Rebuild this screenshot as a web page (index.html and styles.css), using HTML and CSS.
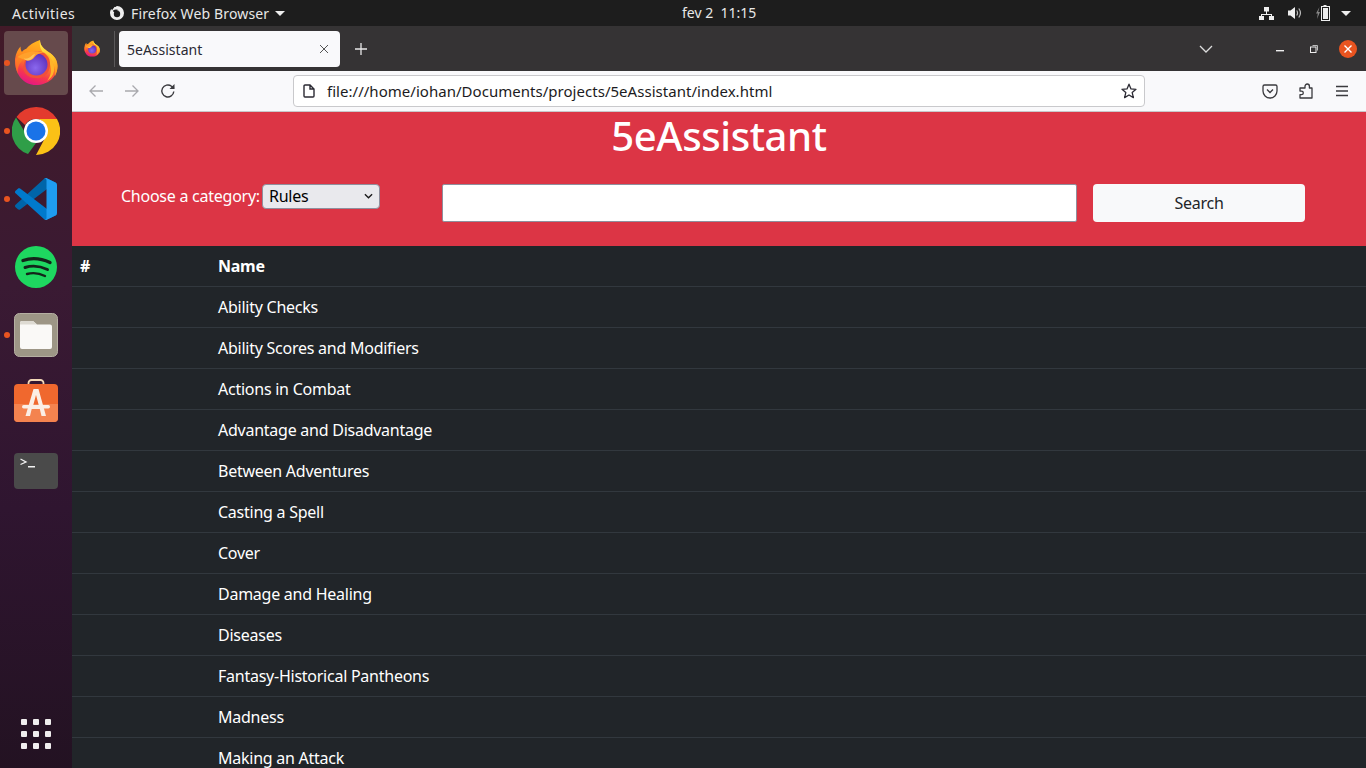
FILE: index.html
```html
<!DOCTYPE html>
<html lang="pt">
<head>
<meta charset="utf-8">
<title>5eAssistant</title>
<link rel="stylesheet" href="styles.css">
</head>
<body>
<svg class="defs" width="0" height="0" aria-hidden="true">
  <defs>
    <linearGradient id="ffBody" x1="0.7" y1="0.05" x2="0.35" y2="1">
      <stop offset="0" stop-color="#ffb81f"/><stop offset="0.45" stop-color="#ff8a1f"/><stop offset="0.75" stop-color="#f8394b"/><stop offset="1" stop-color="#e31587"/>
    </linearGradient>
    <linearGradient id="ffFlame" x1="0.3" y1="0" x2="0.7" y2="1">
      <stop offset="0" stop-color="#ffe44a"/><stop offset="0.6" stop-color="#ffc42a"/><stop offset="1" stop-color="#ff9a1f"/>
    </linearGradient>
    <linearGradient id="ffLeft" x1="0.5" y1="0" x2="0.5" y2="1">
      <stop offset="0" stop-color="#ff9a1f"/><stop offset="1" stop-color="#ff5a2b"/>
    </linearGradient>
    <radialGradient id="ffCore" cx="0.45" cy="0.65" r="0.7">
      <stop offset="0" stop-color="#8a68ee"/><stop offset="1" stop-color="#5a2cb8"/>
    </radialGradient>
    <symbol id="firefox" viewBox="0 0 44 46">
      <path d="M1 20C2 14 4 10 6.500 7.500C6.500 10 7 12 8 13C9 11.500 10.500 10.500 12 10C15 6 20 3 26 1C26 6 29 9 33 12C38 15 43 19 43.500 27C43.500 38 34 46 22 46C10 46 .5 36 1 20Z" fill="url(#ffBody)"/>
      <path d="M26 1C26 6 29 9 33 12C38 15 43.500 19 43.500 27C43.500 31 42.500 34 41 37C42 28 38 19 31 15C27 12 25 7 26 1Z" fill="url(#ffFlame)"/>
      <path d="M30 13C37 17 41 24 40 32C39 37 36 40 33 42C37 37 38 31 36 25C34 19 31 16 30 13Z" fill="#ffb52a"/>
      <path d="M22 12C31 12 37 18 36 27C35 36 28 40 21 39C16 39 11 36 9 30C10 20 15 13 22 12Z" fill="#f0503a"/>
      <circle cx="22.500" cy="25.500" r="11" fill="url(#ffCore)"/>
      <path d="M12 10C9 11 8 13 8 15C5 16 3 18 1.500 21C1 26 2 31 4 35C3 28 6 23 10 20Z" fill="url(#ffLeft)"/>
      <path d="M3.500 18C8 14.500 13 13.500 18 12.500C22 12 27 12.500 30 14C26 13.500 23 15 21 17.500C19 20.500 16 22 14 21.500C10 21 7 19 3.500 18Z" fill="#ffa12b"/>
      <path d="M10 19.500C13 20 16 19 18 16.500C19 15.500 20 15 21 15C20 18 17 21.500 14 21.500C12.500 21.500 11 21 10 19.500Z" fill="#ffc45a"/>
    </symbol>
  </defs>
</svg>

<header class="topbar">
  <span class="activities">Activities</span>
  <span class="appmenu">
    <svg class="app-glyph" viewBox="0 0 16 16"><path d="M8 1a7 7 0 1 1-7 7c0-1.500.5-3 1.400-4l.6 1.500C3.700 4 5 3 5.500 1.800 6 2.500 7 1.600 8 1z" fill="#eee"/><circle cx="8" cy="9" r="3.200" fill="#1d1d1d"/><path d="M4 5.500c2-1.500 4-1.500 6 0-2 0-3 .5-3 1.500H4.500z" fill="#1d1d1d"/></svg>
    <span class="app-name">Firefox Web Browser</span>
    <i class="caret"></i>
  </span>
  <span class="clock">fev 2&nbsp;&nbsp;11:15</span>
  <span class="tray">
    <svg class="tray-net" viewBox="0 0 15 13"><path d="M5 0h5v4.500H8v2.500h5v2h2v4h-5V9h2V8H3v1h2v4H0V9h2V7h5V4.500H5z" fill="#eee"/></svg>
    <svg class="tray-vol" viewBox="0 0 14 12"><path d="M0 3.500h2.500L7 0v12L2.500 8.500H0z" fill="#eee"/><path d="M8.700 3.500q1.700 2.500 0 5M10.800 1.500q3.300 4.500 0 9" fill="none" stroke="#bbb" stroke-width="1.200"/></svg>
    <svg class="tray-bat" viewBox="0 0 14 16"><path d="M3.500 2 0 8.500h1.800L1 14 4 7H2.200z" fill="#888"/><path d="M7.500 0h3v1H14v15H5V1h2.500z" fill="#eee"/><rect x="6" y="2" width="7" height="13" fill="#1d1d1d"/><rect x="7" y="3" width="5" height="11" fill="#eee"/></svg>
    <i class="caret"></i>
  </span>
</header>

<div class="desktop">
  <nav class="dock">
    <div class="dock-item active"><i class="run-dot"></i>
      <svg class="dock-icon ff" viewBox="0 0 44 46"><use href="#firefox"/></svg>
    </div>
    <div class="dock-item"><i class="run-dot"></i>
      <svg class="dock-icon chrome" viewBox="0 0 48 48">
        <path d="M24 0A24 24 0 0 1 45 12H24A12 12 0 0 0 13 18L4.500 10A24 24 0 0 1 24 0Z" fill="#e33b2e"/>
        <path d="M4 10.500 14 27A12 12 0 0 0 24 36L16 47A24 24 0 0 1 4 10.500Z" fill="#2f9e48"/>
        <path d="M24 12H45A24 24 0 0 1 24 48L33 31A12 12 0 0 0 24 12Z" fill="#fbc116"/>
        <circle cx="24" cy="24" r="12" fill="#fff"/><circle cx="24" cy="24" r="9.500" fill="#1a73e8"/>
      </svg>
    </div>
    <div class="dock-item"><i class="run-dot"></i>
      <svg class="dock-icon vscode" viewBox="0 0 100 100">
        <path d="M96.460 10.800 75.860.900C73.470-.260 70.620.220 68.750 2.090L1.350 63.540c-1.810 1.650-1.810 4.500 0 6.160l5.500 5c1.490 1.350 3.730 1.450 5.330.230L93.380 13.300c2.730-2.070 6.620-.130 6.620 3.300v-.240c0-2.400-1.370-4.590-3.540-5.630Z" fill="#0065a9"/>
        <path d="M96.460 89.200 75.860 99.100c-2.390 1.150-5.240.670-7.110-1.200L1.350 36.460c-1.810-1.650-1.810-4.500 0-6.160l5.500-5c1.490-1.350 3.730-1.450 5.330-.230L93.380 86.700c2.730 2.070 6.620.130 6.620-3.300v.240c0 2.400-1.370 4.590-3.540 5.630Z" fill="#007acc"/>
        <path d="M75.860 99.130c-2.390 1.150-5.240.660-7.110-1.210 2.310 2.310 6.250.670 6.250-2.590V4.670c0-3.260-3.940-4.890-6.250-2.590 1.870-1.870 4.720-2.360 7.110-1.210l20.600 9.910c2.170 1.040 3.540 3.230 3.540 5.630v67.170c0 2.400-1.370 4.590-3.540 5.630l-20.600 9.920Z" fill="#1f9cf0"/>
      </svg>
    </div>
    <div class="dock-item">
      <svg class="dock-icon spotify" viewBox="0 0 42 42">
        <circle cx="21" cy="21" r="21" fill="#1ed760"/>
        <path d="M8 14.500Q21 10 35 16.500" fill="none" stroke="#14241a" stroke-width="3.400" stroke-linecap="round"/>
        <path d="M10 21.500Q21 18 32.500 23.500" fill="none" stroke="#14241a" stroke-width="2.900" stroke-linecap="round"/>
        <path d="M12 28Q21 25.500 30 30" fill="none" stroke="#14241a" stroke-width="2.400" stroke-linecap="round"/>
      </svg>
    </div>
    <div class="dock-item"><i class="run-dot"></i>
      <svg class="dock-icon square" viewBox="0 0 44 44">
        <rect x=".5" y=".5" width="43" height="43" rx="5" fill="#9d9686" stroke="#b5afa2"/>
        <path d="M6 10a2 2 0 0 1 2-2h11l4 3.500h13a2 2 0 0 1 2 2V34a2 2 0 0 1-2 2H8a2 2 0 0 1-2-2z" fill="#faf9f7"/>
        <path d="M6 10a2 2 0 0 1 2-2h11l4 3.500H6z" fill="#dedbd3"/>
      </svg>
    </div>
    <div class="dock-item">
      <svg class="dock-icon store" viewBox="0 0 44 43">
        <path d="M14.500 7V4a3 3 0 0 1 3-3h9a3 3 0 0 1 3 3v3" fill="none" stroke="#f3d9b8" stroke-width="1.800"/>
        <path d="M4 5H40a4 4 0 0 1 4 4V39a4 4 0 0 1-4 4H4a4 4 0 0 1-4-4V9a4 4 0 0 1 4-4Z" fill="#f0682e"/>
        <path d="M0 25H44V39a4 4 0 0 1-4 4H4a4 4 0 0 1-4-4Z" fill="#f4834f"/>
        <path d="M19.500 10h5l7.500 27h-4.500l-1.700-7H17.700L16 37h-4.500zM22 16l-3 11h6z" fill="#fbeee5"/>
        <rect x="8" y="26" width="28" height="3.500" rx="1.700" fill="#fbeee5"/>
      </svg>
    </div>
    <div class="dock-item">
      <svg class="dock-icon term" viewBox="0 0 44 36">
        <rect width="44" height="36" rx="4" fill="#4a4a4a"/>
        <path d="M6.500 6 12 9 6.500 11.500" fill="none" stroke="#f2f2f2" stroke-width="1.300"/>
        <rect x="14" y="13" width="7" height="1.500" fill="#f2f2f2"/>
      </svg>
    </div>
    <div class="apps-grid">
      <i></i><i></i><i></i><i></i><i></i><i></i><i></i><i></i><i></i>
    </div>
  </nav>

  <section class="browser">
    <div class="tabbar">
      <div class="tabs-view">
        <svg class="tab-ff" viewBox="0 0 44 46"><use href="#firefox"/></svg>
      </div>
      <div class="tab">
        <span class="tab-title">5eAssistant</span>
        <svg class="tab-close" viewBox="0 0 10 10"><path d="M1 1l8 8M9 1l-8 8" stroke="#555" stroke-width="1"/></svg>
      </div>
      <svg class="new-tab" viewBox="0 0 12 12"><path d="M6 0v12M0 6h12" stroke="#e8e8e8" stroke-width="1.300"/></svg>
      <svg class="tab-list" viewBox="0 0 14 8"><path d="M1 1l6 6 6-6" fill="none" stroke="#ddd" stroke-width="1.300"/></svg>
      <div class="win-controls">
        <svg class="win-min" viewBox="0 0 8 2"><rect width="8" height="1.400" fill="#eee"/></svg>
        <svg class="win-max" viewBox="0 0 8 8"><path d="M2.500.5h5v5" fill="none" stroke="#bbb"/><rect x=".5" y="2" width="5.500" height="5.500" fill="#353334" stroke="#eee"/></svg>
        <span class="win-close"><svg viewBox="0 0 8 8"><path d="M.5.5l7 7M7.500.5l-7 7" stroke="#fff" stroke-width="1.400"/></svg></span>
      </div>
    </div>

    <div class="toolbar">
      <svg class="tool tool-back" viewBox="0 0 16 16"><path d="M15 8H2M7.500 2.500 2 8l5.500 5.500" fill="none" stroke="#a9a9ad" stroke-width="1.300"/></svg>
      <svg class="tool tool-fwd" viewBox="0 0 16 16"><path d="M1 8h13M8.500 2.500 14 8l-5.500 5.500" fill="none" stroke="#a9a9ad" stroke-width="1.300"/></svg>
      <svg class="tool tool-reload" viewBox="0 0 16 16"><path d="M13.800 8.500A6 6 0 1 1 11.500 3.200L14 5.500" fill="none" stroke="#3a3a3e" stroke-width="1.400"/><path d="M14.500 1v5h-5z" fill="#3a3a3e"/></svg>
      <div class="urlbar">
        <svg class="url-page" viewBox="0 0 12 14"><path d="M1 2a1 1 0 0 1 1-1h5l4 4v7a1 1 0 0 1-1 1H2a1 1 0 0 1-1-1zM7 1v4h4" fill="none" stroke="#2b2a33" stroke-width="1.400"/></svg>
        <span class="url-text">file:///home/iohan/Documents/projects/5eAssistant/index.html</span>
        <svg class="url-star" viewBox="0 0 16 16"><path d="M8 1.200 10 5.900l5 .4-3.800 3.300 1.200 5L8 12l-4.400 2.600 1.200-5L1 6.300l5-.4z" fill="none" stroke="#2b2a33" stroke-width="1.300" stroke-linejoin="round"/></svg>
      </div>
      <svg class="tool tool-pocket" viewBox="0 0 16 16"><path d="M2.500 2h11A1.500 1.500 0 0 1 15 3.500V8a7 7 0 0 1-14 0V3.500A1.500 1.500 0 0 1 2.500 2z" fill="none" stroke="#3a3a3e" stroke-width="1.300"/><path d="M5 6.500 8 9.500l3-3" fill="none" stroke="#3a3a3e" stroke-width="1.300"/></svg>
      <svg class="tool tool-ext" viewBox="0 0 16 16"><path d="M2 5h5V3.200a2.200 2.200 0 0 1 4.400 0V5H14v10H2v-3.300h1.500a1.800 1.800 0 0 0 0-3.600H2z" fill="none" stroke="#3a3a3e" stroke-width="1.300" stroke-linejoin="round"/></svg>
      <svg class="tool tool-menu" viewBox="0 0 14 12"><path d="M1 1.500h12M1 6h12M1 10.500h12" stroke="#3a3a3e" stroke-width="1.300"/></svg>
    </div>

    <main class="page">
      <div class="hero">
        <h1 class="hero-title">5eAssistant</h1>
        <form class="search-row">
          <div class="category">
            <label class="category-label" for="cat">Choose a category:</label>
            <span class="select-box" id="cat"><span>Rules</span>
              <svg class="select-arrow" viewBox="0 0 10 6"><path d="M1 1l4 4 4-4" fill="none" stroke="#1a1a1a" stroke-width="1.500"/></svg>
            </span>
          </div>
          <span class="search-input"></span>
          <span class="search-btn">Search</span>
        </form>
      </div>
      <table class="rules">
        <thead><tr><th class="col-num">#</th><th>Name</th></tr></thead>
        <tbody>
          <tr><td></td><td>Ability Checks</td></tr>
          <tr><td></td><td>Ability Scores and Modifiers</td></tr>
          <tr><td></td><td>Actions in Combat</td></tr>
          <tr><td></td><td>Advantage and Disadvantage</td></tr>
          <tr><td></td><td>Between Adventures</td></tr>
          <tr><td></td><td>Casting a Spell</td></tr>
          <tr><td></td><td>Cover</td></tr>
          <tr><td></td><td>Damage and Healing</td></tr>
          <tr><td></td><td>Diseases</td></tr>
          <tr><td></td><td>Fantasy-Historical Pantheons</td></tr>
          <tr><td></td><td>Madness</td></tr>
          <tr><td></td><td>Making an Attack</td></tr>
        </tbody>
      </table>
    </main>
  </section>
</div>
</body>
</html>
```
FILE: styles.css
```css
* { box-sizing: border-box; }
html, body { margin: 0; height: 100%; overflow: hidden; }
body {
  width: 1366px;
  height: 768px;
  display: flex;
  flex-direction: column;
  font-family: "Noto Sans", "Open Sans", sans-serif;
  background: #212529;
}
.defs { position: absolute; }
svg { display: block; flex: none; }

/* top bar */
.topbar {
  height: 26px;
  flex: none;
  background: #1d1d1d;
  color: #e8e8e8;
  font-size: 14px;
  display: flex;
  align-items: center;
  padding: 0 15px 0 12px;
  position: relative;
}
.activities { width: 97px; letter-spacing: .5px; }
.appmenu { display: flex; align-items: center; gap: 6px; }
.app-name { letter-spacing: .15px; }
.app-glyph { width: 16px; height: 16px; }
.caret {
  display: block;
  width: 0; height: 0;
  border-left: 5px solid transparent;
  border-right: 5px solid transparent;
  border-top: 5px solid #eee;
}
.clock { position: absolute; left: 682px; top: 4px; line-height: 18px; }
.tray { margin-left: auto; display: flex; align-items: center; }
.tray-net { width: 15px; height: 13px; margin-right: 14px; }
.tray-vol { width: 14px; height: 12px; margin-right: 14px; }
.tray-bat { width: 14px; height: 16px; margin-right: 11px; }

/* dock */
.desktop { flex: 1; display: flex; min-height: 0; }
.dock {
  width: 72px;
  flex: none;
  background: linear-gradient(180deg, #421a28 0%, #3a1a33 35%, #2f1530 65%, #231222 100%);
  display: flex;
  flex-direction: column;
  align-items: center;
  padding: 5px 4px 0;
  position: relative;
}
.dock-item {
  width: 64px;
  height: 64px;
  margin-bottom: 4px;
  display: flex;
  align-items: center;
  justify-content: center;
  position: relative;
  border-radius: 4px;
}
.dock-item.active { background: #664a4c; }
.run-dot {
  position: absolute;
  left: 0;
  top: 29px;
  width: 6px; height: 6px;
  border-radius: 50%;
  background: #e95420;
}
.dock-icon { width: 44px; height: 44px; }
.ff { height: 46px; margin-top: -2px; }
.chrome { width: 48px; height: 48px; }
.vscode { width: 42px; height: 42px; }
.spotify { width: 42px; height: 42px; }
.store { height: 43px; margin-top: -5px; }
.term { height: 36px; }
.apps-grid {
  position: absolute;
  left: 21px;
  top: 693px;
  display: grid;
  grid-template-columns: repeat(3, 6px);
  gap: 6px;
}
.apps-grid i { display: block; width: 6px; height: 6px; background: #f0eeee; border-radius: 1px; }

/* browser */
.browser { flex: 1; min-width: 0; display: flex; flex-direction: column; }
.tabbar {
  height: 45px;
  flex: none;
  background: #353334;
  display: flex;
  align-items: center;
  padding: 0 9px 0 0;
}
.tabs-view {
  width: 43px;
  height: 36px;
  border-right: 1px solid #5b595a;
  display: flex;
  align-items: center;
  padding-left: 12px;
  margin-right: 4px;
}
.tab-ff { width: 16px; height: 17px; }
.tab {
  width: 221px;
  height: 36px;
  background: #f9f9fb;
  border-radius: 4px;
  display: flex;
  align-items: center;
  padding: 1px 11px 0 8px;
  color: #2b2a33;
  font-size: 14px;
}
.tab-title { flex: 1; }
.tab-close { width: 10px; height: 10px; margin-top: -1px; }
.new-tab { width: 12px; height: 12px; margin-left: 15px; }
.tab-list { width: 14px; height: 8px; margin-left: 832px; }
.win-controls { margin-left: auto; display: flex; align-items: center; }
.win-min { width: 8px; height: 2px; margin-right: 26px; margin-top: 5px; }
.win-max { width: 8px; height: 8px; margin-right: 21px; }
.win-close {
  width: 18px; height: 18px;
  border-radius: 50%;
  background: #e95420;
  display: flex; align-items: center; justify-content: center;
}
.win-close svg { width: 8px; height: 8px; }

.toolbar {
  height: 41px;
  flex: none;
  background: #f9f9fb;
  border-bottom: 1px solid #c8c8ca;
  display: flex;
  align-items: center;
  padding-left: 16px;
  position: relative;
  z-index: 1;
}
.tool { width: 16px; height: 16px; }
.tool-fwd { margin-left: 20px; }
.tool-reload { margin-left: 20px; }
.urlbar {
  width: 852px;
  height: 32px;
  margin-left: 117px;
  background: #fff;
  border: 1px solid #c9c9cc;
  border-radius: 4px;
  display: flex;
  align-items: center;
  padding: 0 7px 0 9px;
  font-size: 15px;
  letter-spacing: .03px;
  color: #1c1b22;
}
.url-page { width: 12px; height: 14px; }
.url-text { flex: 1; margin-left: 12px; white-space: nowrap; }
.url-star { width: 16px; height: 16px; }
.tool-pocket { margin-left: 117px; }
.tool-ext { margin-left: 20px; }
.tool-menu { width: 14px; height: 12px; margin-left: 21px; }

/* page */
.page { flex: 1; min-height: 0; color: #fff; letter-spacing: -.25px; }
.hero { display: flow-root; height: 134px; background: #dc3545; }
.hero-title {
  margin: -4px 0 -2px;
  font-size: 40px;
  font-weight: 500;
  line-height: 56px;
  letter-spacing: -.4px;
  text-align: center;
}
.search-row {
  margin: 22px 0 0;
  padding-left: 49px;
  display: flex;
  align-items: flex-start;
}
.category { width: 321px; display: flex; align-items: flex-start; gap: 3px; font-size: 16px; line-height: 24px; }
.category-label { width: 138px; white-space: nowrap; }
.select-box {
  width: 118px;
  height: 25px;
  background: #e9e9ed;
  border: 1px solid #8f8f9d;
  border-radius: 4px;
  color: #000;
  display: flex;
  align-items: center;
  justify-content: space-between;
  padding: 0 6px 1px 6px;
}
.select-arrow { width: 9px; height: 6px; }
.search-input {
  display: block;
  width: 635px;
  height: 38px;
  background: #fff;
  border: 1px solid #8f8f9d;
  border-radius: 2px;
}
.search-btn {
  width: 212px;
  height: 38px;
  margin-left: 16px;
  background: #f8f9fa;
  border-radius: 4px;
  color: #212529;
  font-size: 16px;
  display: flex;
  align-items: center;
  justify-content: center;
}
.rules {
  width: 100%;
  border-collapse: collapse;
  background: #212529;
  font-size: 16px;
  line-height: 24px;
  table-layout: fixed;
}
.rules th, .rules td {
  height: 41px;
  padding: 8px;
  text-align: left;
  border-bottom: 1px solid #32383e;
  vertical-align: middle;
}
.rules th { height: 40px; padding-bottom: 7px; font-weight: 700; }
.col-num { width: 138px; }
```
